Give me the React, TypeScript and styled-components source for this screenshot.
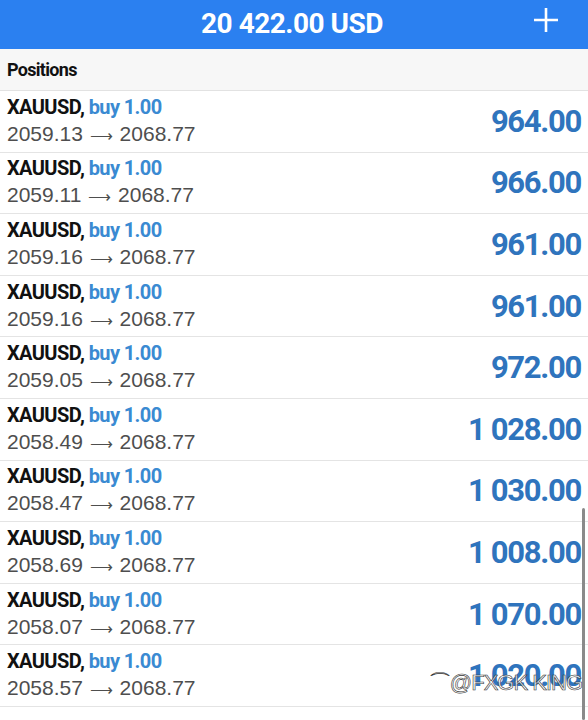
import styled, { createGlobalStyle } from "styled-components";

const GlobalStyle = createGlobalStyle`
    html, body {
        margin: 0;
        padding: 0;
        background: #fff;
    }
    body {
        font-family: Roboto, "Liberation Sans", sans-serif;
        -webkit-font-smoothing: antialiased;
    }
`;

const Screen = styled.div`
    position: relative;
    width: 588px;
    height: 720px;
    overflow: hidden;
    background: #fff;
`;

const Header = styled.div`
    height: 49px;
    background: #2b80f0;
    display: flex;
    align-items: center;
    justify-content: center;
    position: relative;
`;

const Balance = styled.div`
    color: #fff;
    font-size: 28px;
    font-weight: 700;
    letter-spacing: -0.5px;
    margin-top: -2px;
    margin-right: 4px;
`;

const PlusButton = styled.button`
    position: absolute;
    right: 29px;
    top: 7px;
    width: 26px;
    height: 26px;
    padding: 0;
    border: none;
    background: transparent;
    display: flex;
`;

const SectionTitle = styled.div`
    height: 42px;
    box-sizing: border-box;
    background: #f7f7f7;
    border-bottom: 1px solid #e2e2e2;
    display: flex;
    align-items: center;
    padding: 0 7px;
    font-size: 18px;
    font-weight: 700;
    color: #111;
    letter-spacing: -0.7px;
`;

const Row = styled.div`
    height: 61.6px;
    box-sizing: border-box;
    border-bottom: 1px solid #e4e4e4;
    display: flex;
    align-items: center;
    justify-content: space-between;
    padding: 0 7px;
`;

const Info = styled.div`
    display: flex;
    flex-direction: column;
    gap: 1px;
`;

const Symbol = styled.div`
    font-size: 20px;
    font-weight: 700;
    color: #111;
    letter-spacing: -0.6px;
    line-height: 26px;
`;

const Side = styled.span`
    color: #3a8ad2;
`;

const Prices = styled.div`
    font-size: 21px;
    color: #4e4e4e;
    line-height: 26px;
    font-family: "Liberation Sans", Roboto, sans-serif;
`;

const Arrow = styled.span`
    font-family: "DejaVu Sans", sans-serif;
    font-weight: 200;
    font-size: 16px;
    margin: 0 1px;
`;

const Profit = styled.div`
    font-size: 31px;
    font-weight: 700;
    color: #2f74bd;
    letter-spacing: -1.3px;
`;

const ScrollThumb = styled.div`
    position: absolute;
    right: 3px;
    top: 508px;
    width: 3px;
    height: 212px;
    border-radius: 2px;
    background: #8a8a8a;
`;

const Watermark = styled.div`
    position: absolute;
    right: 6px;
    top: 668px;
    font-size: 22px;
    font-family: "Liberation Sans", sans-serif;
    color: rgba(255, 255, 255, 0.75);
    -webkit-text-stroke: 0.6px #333;
    letter-spacing: -1px;
`;

const positions = [
    { open: "2059.13", profit: "964.00" },
    { open: "2059.11", profit: "966.00" },
    { open: "2059.16", profit: "961.00" },
    { open: "2059.16", profit: "961.00" },
    { open: "2059.05", profit: "972.00" },
    { open: "2058.49", profit: "1 028.00" },
    { open: "2058.47", profit: "1 030.00" },
    { open: "2058.69", profit: "1 008.00" },
    { open: "2058.07", profit: "1 070.00" },
    { open: "2058.57", profit: "1 020.00" },
];

export default function App() {
    return (
        <>
            <GlobalStyle />
            <Screen>
                <Header>
                    <Balance>20 422.00 USD</Balance>
                    <PlusButton>
                        <svg width="26" height="26" viewBox="0 0 26 26">
                            <path d="M13 1v24M1 13h24" stroke="#fff" strokeWidth="2.6" />
                        </svg>
                    </PlusButton>
                </Header>
                <SectionTitle>Positions</SectionTitle>
                {positions.map((p, i) => (
                    <Row key={i}>
                        <Info>
                            <Symbol>
                                XAUUSD, <Side>buy 1.00</Side>
                            </Symbol>
                            <Prices>
                                {p.open} <Arrow>⟶</Arrow> 2068.77
                            </Prices>
                        </Info>
                        <Profit>{p.profit}</Profit>
                    </Row>
                ))}
                <ScrollThumb />
                <Watermark>⌒@FXGK KING</Watermark>
            </Screen>
        </>
    );
}
